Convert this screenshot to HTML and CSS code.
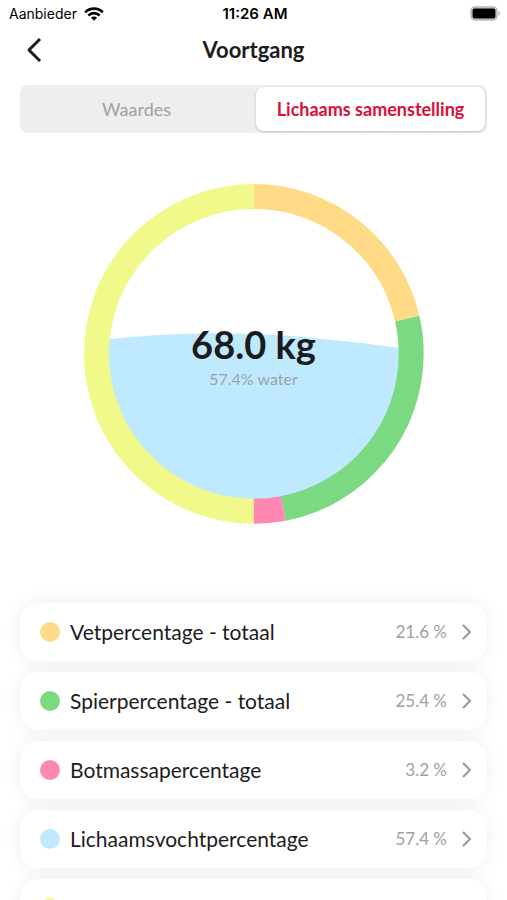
FILE: index.html
```
<!DOCTYPE html>
<html lang="nl">

<head>
    <meta charset="utf-8">
    <meta name="viewport" content="width=device-width, initial-scale=1.0">
    <title>Voortgang</title>
    <link rel="stylesheet" href="styles.css">
</head>

<body>
    <!-- Status bar -->
    <div class="status">
        <div class="carrier">
            <span>Aanbieder</span>
            <svg width="20" height="14" viewBox="0 0 20 14" aria-hidden="true">
                <g fill="none" stroke="#000" stroke-width="2.6">
                    <path d="M1.200 5.300a12.400 12.400 0 0 1 17.600 0" />
                    <path d="M4.400 8.500a7.900 7.900 0 0 1 11.200 0" />
                </g>
                <path d="M10 13.800 6.900 10.700a4.400 4.400 0 0 1 6.200 0z" />
            </svg>
        </div>
        <span class="time">11:26 AM</span>
        <svg class="battery" width="31" height="15" viewBox="0 0 31 15" aria-hidden="true">
            <rect x="1" y="1" width="26" height="13" rx="4" fill="#ccc" stroke="#b5b5b5" stroke-width="1.4" />
            <rect x="2.600" y="2.600" width="22.800" height="9.800" rx="2" />
            <path d="M28.600 5v5c1.900-.8 1.900-4.200 0-5z" fill="#b5b5b5" />
        </svg>
    </div>

    <header class="header">
        <button class="back" type="button" aria-label="Terug">
            <svg width="16" height="26" viewBox="0 0 16 26">
                <path d="M14 2 3 13l11 11" fill="none" stroke="#1c1c1c" stroke-width="3" stroke-linejoin="round" />
            </svg>
        </button>
        <h1>Voortgang</h1>
    </header>

    <nav class="tabs">
        <button class="tab" type="button">Waardes</button>
        <button class="tab active" type="button">Lichaams samenstelling</button>
    </nav>

    <!-- Body composition ring -->
    <div class="chart">
        <svg viewBox="0 0 340 340" aria-hidden="true">
            <path d="M18 156C110 146 190 146 322 165V170A152 152 0 0 1 18 170z" fill="#bfe9ff" />
            <g class="ring" transform="rotate(-90 170 170)">
                <circle cx="170" cy="170" r="157.500" pathLength="1000" stroke="#f0f98a" stroke-dasharray="500 500" stroke-dashoffset="-500" />
                <circle cx="170" cy="170" r="157.500" pathLength="1000" stroke="#ffda87" stroke-dasharray="214 786" />
                <circle cx="170" cy="170" r="157.500" pathLength="1000" stroke="#7bd982" stroke-dasharray="256 744" stroke-dashoffset="-214" />
                <circle cx="170" cy="170" r="157.500" pathLength="1000" stroke="#ff87b2" stroke-dasharray="30 970" stroke-dashoffset="-470" />
            </g>
        </svg>
        <div class="total">
            <strong>68.0 kg</strong>
            <span>57.4% water</span>
        </div>
    </div>

    <main class="list">
        <a class="card" href="#">
            <span class="dot fat"></span>
            <span class="name">Vetpercentage - totaal</span>
            <span class="value">21.6 %</span>
            <svg class="chevron" width="10" height="16" viewBox="0 0 10 16"><path d="M1 1l7 7-7 7" /></svg>
        </a>
        <a class="card" href="#">
            <span class="dot muscle"></span>
            <span class="name">Spierpercentage - totaal</span>
            <span class="value">25.4 %</span>
            <svg class="chevron" width="10" height="16" viewBox="0 0 10 16"><path d="M1 1l7 7-7 7" /></svg>
        </a>
        <a class="card" href="#">
            <span class="dot bone"></span>
            <span class="name">Botmassapercentage</span>
            <span class="value">3.2 %</span>
            <svg class="chevron" width="10" height="16" viewBox="0 0 10 16"><path d="M1 1l7 7-7 7" /></svg>
        </a>
        <a class="card" href="#">
            <span class="dot water"></span>
            <span class="name">Lichaamsvochtpercentage</span>
            <span class="value">57.4 %</span>
            <svg class="chevron" width="10" height="16" viewBox="0 0 10 16"><path d="M1 1l7 7-7 7" /></svg>
        </a>
        <div class="card">
            <span class="dot rest"></span>
        </div>
    </main>
</body>

</html>
```

FILE: styles.css
```
* {
    box-sizing: border-box;
}

body {
    margin: 0;
    height: 100vh;
    overflow: hidden;
    background: #fff;
    color: #1c1c1c;
    font-family: Lato, "Liberation Sans", sans-serif;
}

button {
    border: 0;
    padding: 0;
    background: none;
    font-family: inherit;
    cursor: pointer;
}

/* Status bar */
.status {
    display: grid;
    grid-template-columns: 1fr auto 1fr;
    align-items: center;
    height: 27px;
    padding: 0 6px 0 9px;
    color: #000;
    font: 14px/18px Inter, sans-serif;
}

.carrier {
    display: flex;
    align-items: center;
    gap: 7px;
}

.time {
    font-size: 15px;
    font-weight: 600;
}

.battery {
    justify-self: end;
}

/* Title row */
.header {
    display: grid;
    grid-template-columns: 28px 1fr 28px;
    align-items: center;
    height: 46px;
    padding: 0 20px;
}

.back {
    display: flex;
    justify-content: center;
}

h1 {
    margin: 0;
    font-size: 22px;
    line-height: 24px;
    text-align: center;
}

/* Tabs */
.tabs {
    display: grid;
    grid-template-columns: 1fr 1fr;
    gap: 5px;
    height: 48px;
    margin: 12px 20px 0;
    padding: 2px;
    border-radius: 8px;
    background: #eee;
}

.tab {
    border-radius: 8px;
    color: #a0a0a0;
    font-size: 18px;
}

.tab.active {
    background: #fff;
    box-shadow: 0 1px 3px rgba(0, 0, 0, 0.2);
    color: #d90f37;
    font-weight: bold;
}

/* Ring */
.chart {
    position: relative;
    width: 67%;
    margin: 51px auto 0;
}

.chart svg {
    display: block;
    width: 100%;
    overflow: visible;
}

.ring {
    fill: none;
    stroke-width: 25;
}

.total {
    position: absolute;
    inset: 0;
    display: flex;
    flex-direction: column;
    align-items: center;
    justify-content: center;
    padding-top: 4px;
    gap: 3px;
}

.total strong {
    font-size: 38px;
    line-height: 44px;
}

.total span {
    color: #9aa3a8;
    font-size: 16px;
    line-height: 20px;
}

/* Values */
.list {
    display: flex;
    flex-direction: column;
    gap: 11px;
    margin-top: 79px;
    padding: 0 20px;
}

.card {
    display: flex;
    align-items: center;
    height: 58px;
    padding: 0 15px 0 20px;
    border-radius: 18px;
    background: #fff;
    box-shadow: 0 0 18px rgba(0, 0, 0, 0.07);
    color: inherit;
    font-size: 21px;
    line-height: 24px;
    text-decoration: none;
}

.dot {
    width: 20px;
    height: 20px;
    margin-right: 10px;
    border-radius: 50%;
}

.fat {
    background: #ffda87;
}

.muscle {
    background: #7bd982;
}

.bone {
    background: #ff87b2;
}

.water {
    background: #bfe9ff;
}

.rest {
    background: #f0f98a;
}

.name {
    flex: 1;
}

.value {
    color: #a0a0a0;
    font-size: 17px;
}

.chevron {
    margin-left: 15px;
    fill: none;
    stroke: #999;
    stroke-width: 2;
}
```
